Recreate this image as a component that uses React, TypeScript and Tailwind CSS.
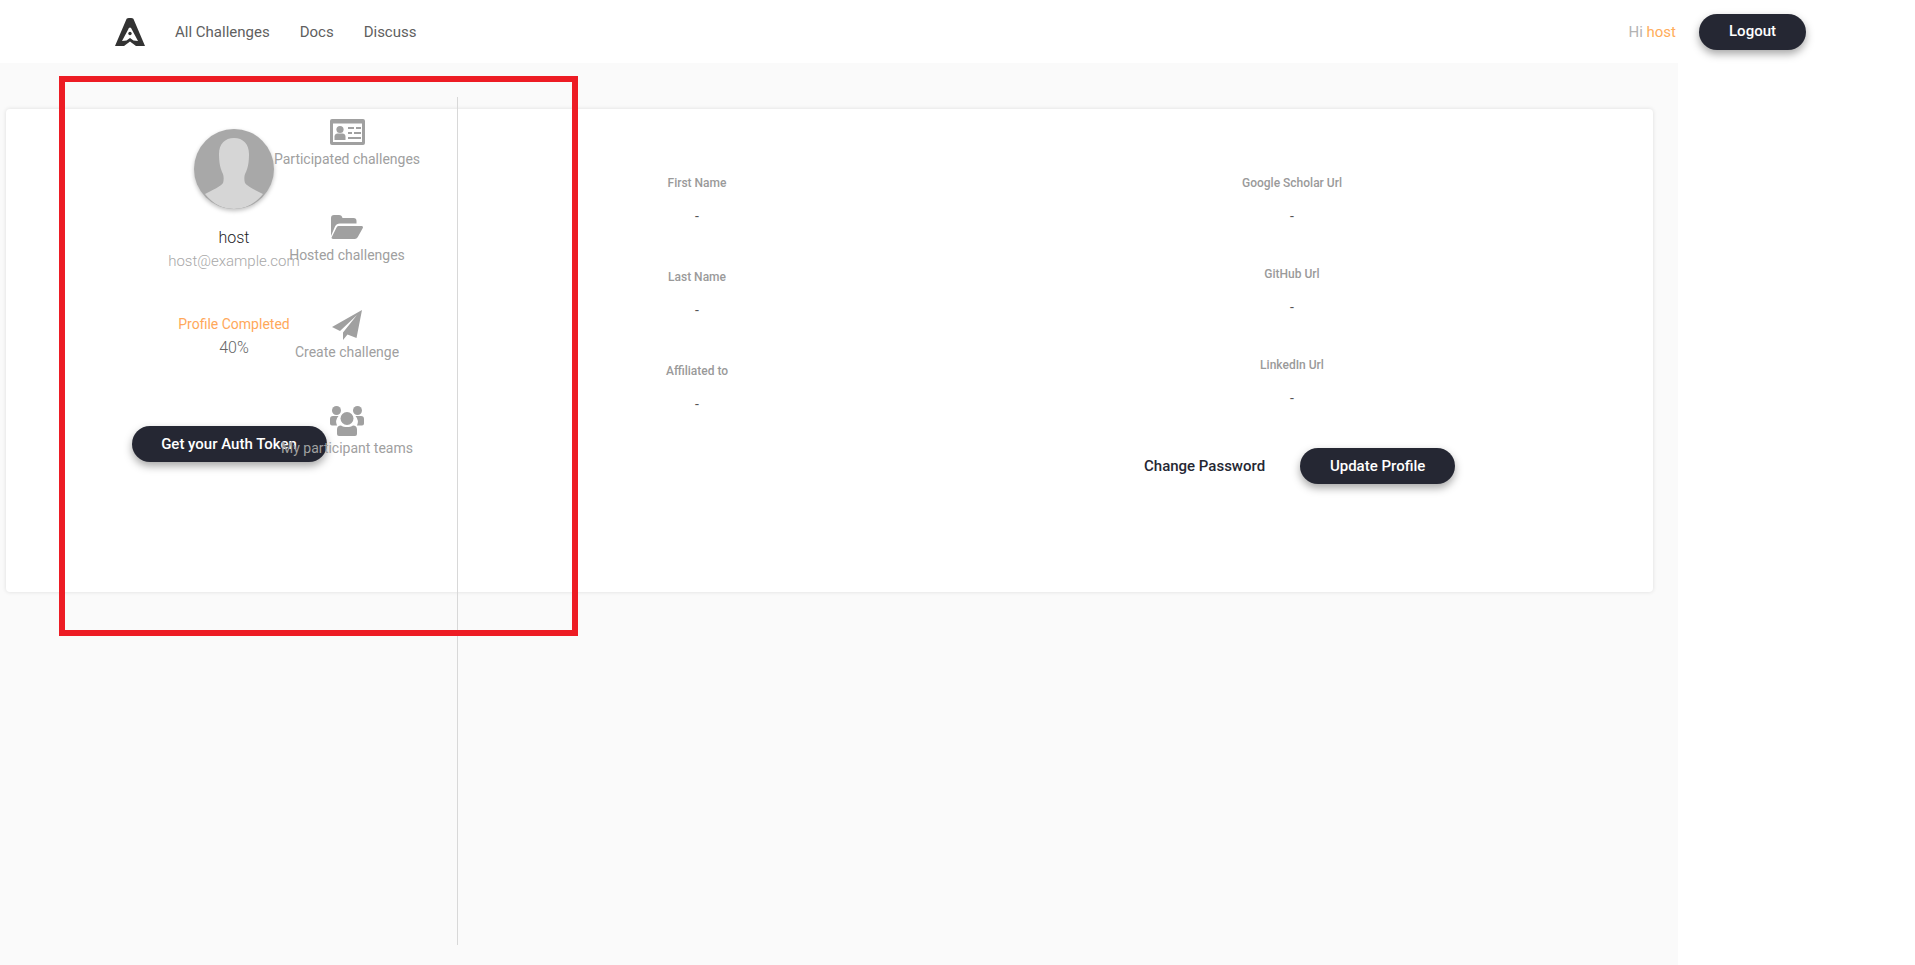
import { FC } from "react"

const Logo = () => (
	<svg viewBox="0 0 30 28" className="h-7 w-[30px]">
		<path
			fill="#333"
			fillRule="evenodd"
			d="M11.500 1c.6-1.200 6.400-1.200 7 0L30 28h-9L15 23.500 9 28H0L11.500 1ZM15 9.500c-.8 0-1.300.8-1.700 1.700L7 23l4.500-.5 3.500-2.500 3.500 2.500L23 23l-6.300-11.800c-.4-.9-.9-1.700-1.700-1.700Z"
		/>
		<circle cx="15" cy="15.500" r="1.700" fill="#333" />
	</svg>
)

const CardIcon = () => (
	<svg viewBox="0 0 35 26" className="h-[26px] w-[35px]" fill="#a0a0a0">
		<path
			fillRule="evenodd"
			d="M2 0h31a2 2 0 0 1 2 2v22a2 2 0 0 1-2 2H2a2 2 0 0 1-2-2V2a2 2 0 0 1 2-2Zm1 4.500v18.500h29V4.500Z"
		/>
		<circle cx="10" cy="10.500" r="3.600" />
		<path d="M4.500 21v-3.500c0-2 1.500-3 3-3h5c1.500 0 3 1 3 3V21Z" />
		<path d="M18 8h6v2h-6ZM26 8h5v2h-5ZM18 13h4v2h-4ZM24 13h7v2h-7ZM18 18h13v2H18Z" />
	</svg>
)

const FolderIcon = () => (
	<svg viewBox="0 0 32 24" className="mb-[2px] h-6 w-8" fill="#a0a0a0">
		<path d="M0 21V3a3 3 0 0 1 3-3h5c2 0 3 1 3.500 3h11a3 3 0 0 1 3 3v2.500H9c-2.500 0-4 1-5 3Z" />
		<path d="M7.500 11h23c1.200 0 1.800 1 1.300 2l-5 9c-.7 1.300-1.800 2-3 2H2c-1.200 0-1.800-1-1.200-2l4.500-9c.5-1.200 1.200-2 2.200-2Z" />
	</svg>
)

const PlaneIcon = () => (
	<svg viewBox="0 0 30 30" className="-mb-[2px] h-[30px] w-[30px]" fill="#a0a0a0">
		<path d="M30 0 0 17l8 4L25 5 11 22.500V30l4.500-5.500 9 3.500Z" />
	</svg>
)

const TeamIcon = () => (
	<svg viewBox="0 0 34 30" className="-mb-[2px] h-[30px] w-[34px]" fill="#a0a0a0">
		<circle cx="6.500" cy="4.500" r="4.500" />
		<circle cx="27.500" cy="4.500" r="4.500" />
		<path d="M3 10h5.500a9 9 0 0 0-1.500 9.500H2a2 2 0 0 1-2-2V13a3 3 0 0 1 3-3ZM31 10h-5.500a9 9 0 0 1 1.500 9.500h5a2 2 0 0 0 2-2V13a3 3 0 0 0-3-3Z" />
		<circle cx="17" cy="12.500" r="6.500" />
		<path d="M11 19.500c1.500 1.200 3.800 1.500 6 1.500s4.500-.3 6-1.500c2.500 0 4 1.500 4 4V28a2 2 0 0 1-2 2H9a2 2 0 0 1-2-2v-4.500c0-2.500 1.500-4 4-4Z" />
	</svg>
)

const Avatar = () => (
	<div className="h-20 w-20 overflow-hidden rounded-full bg-[#a8a8a8] shadow-[0_2px_4px_rgba(0,0,0,0.25)]">
		<svg viewBox="0 0 80 80" className="h-20 w-20" fill="#d6d6d6">
			<path d="M40 9c-9 0-15 6-15 16 0 8 1 13 3 18 2 3 2 8 1 11-2 3-10 7-18 11 8 10 18 15 29 15s21-5 29-15c-8-4-16-8-18-11-1-3-1-8 1-11 2-5 3-10 3-18 0-10-6-16-15-16Z" />
		</svg>
	</div>
)

const DarkButton: FC<{ label: string; className: string }> = ({ label, className }) => (
	<button
		className={`h-9 rounded-[18px] bg-[#252733] text-[15px] font-medium text-white shadow-[0_4px_8px_rgba(0,0,0,0.35)] ${className}`}
	>
		{label}
	</button>
)

const ActionItem: FC<{ label: string; icon: React.ReactNode }> = ({ label, icon }) => (
	<div className="flex h-[95.5px] flex-col items-center">
		{icon}
		<span className="mt-[4px] text-sm leading-[20px] text-[#a0a0a0]">{label}</span>
	</div>
)

const Field: FC<{ label: string; className: string }> = ({ label, className }) => (
	<div className={`flex flex-col items-center ${className}`}>
		<span className="text-xs leading-[14px] font-medium text-[#9a9a9a]">{label}</span>
		<span className="mt-[19px] text-sm leading-[14px] text-[#555]">-</span>
	</div>
)

const App = () => {
	return (
		<div className="relative h-[965px] w-[1915px] overflow-hidden bg-white font-['Roboto',sans-serif]">
			<header className="flex h-[63px] items-center pl-[115px]">
				<Logo />
				<nav className="mt-[2px] ml-[30px] flex gap-[30px] text-[15px] text-[#606060]">
					<span>All Challenges</span>
					<span>Docs</span>
					<span>Discuss</span>
				</nav>
				<div className="ml-auto flex items-center pr-[109px]">
					<span className="mt-[2px] text-[15px] text-[#b3b3b3]">
						Hi <span className="text-[#ffad5b]">host</span>
					</span>
					<DarkButton label="Logout" className="ml-[23px] w-[107px]" />
				</div>
			</header>

			<main className="h-[902px] w-[1678px] bg-[#fafafa] pt-[46px] pl-[6px]">
				<section className="flex h-[483px] w-[1647px] items-start rounded bg-white shadow-[0_0_4px_rgba(0,0,0,0.12)]">
					<div className="-mt-3 grid h-[848px] w-[452px] shrink-0 border-r border-[#d8d8d8]">
						<div className="col-start-1 row-start-1 ml-[128px] flex w-[200px] flex-col items-center pt-8">
							<Avatar />
							<span className="mt-[18px] text-base leading-[22px] font-light text-[#1c1d26]">host</span>
							<span className="mt-[1px] text-[15px] leading-[22px] font-light text-[#a8a8a8]">
								host@example.com
							</span>
							<span className="mt-[42px] text-sm leading-[20px] text-[#ffa85a]">
								Profile Completed
							</span>
							<span className="mt-[3px] text-base leading-[22px] font-light text-[#666]">40%</span>
							<DarkButton label="Get your Auth Token" className="mt-[67px] -ml-[10px] w-[195px]" />
						</div>
						<div className="relative col-start-1 row-start-1 ml-[261px] flex w-[160px] flex-col pt-[22px]">
							<ActionItem label="Participated challenges" icon={<CardIcon />} />
							<ActionItem label="Hosted challenges" icon={<FolderIcon />} />
							<ActionItem label="Create challenge" icon={<PlaneIcon />} />
							<ActionItem label="My participant teams" icon={<TeamIcon />} />
						</div>
					</div>

					<div className="-ml-px grid grid-cols-[480px_710px] pt-[67px]">
						<div className="flex flex-col">
							<Field label="First Name" className="h-[94px]" />
							<Field label="Last Name" className="h-[94px]" />
							<Field label="Affiliated to" className="h-[94px]" />
						</div>
						<div className="flex flex-col">
							<Field label="Google Scholar Url" className="h-[91px]" />
							<Field label="GitHub Url" className="h-[91px]" />
							<Field label="LinkedIn Url" className="h-[91px]" />
							<div className="mt-[-1px] ml-[207px] flex items-center">
								<span className="text-[15px] font-medium text-[#252733]">Change Password</span>
								<DarkButton label="Update Profile" className="ml-[35px] w-[155px]" />
							</div>
						</div>
					</div>
				</section>
			</main>

			{/* annotation drawn over the screenshot */}
			<div className="pointer-events-none absolute top-[76px] left-[59px] h-[560px] w-[519px] border-[6px] border-[#ed1c24]" />
		</div>
	)
}

export default App
